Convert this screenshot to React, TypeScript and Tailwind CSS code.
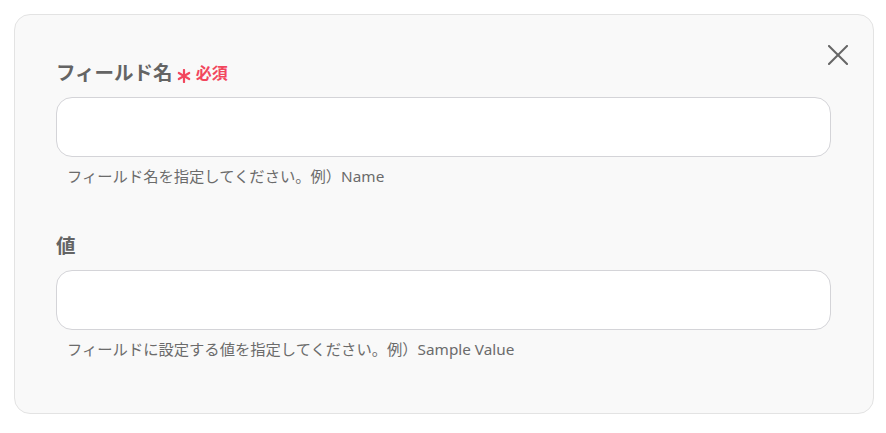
const font = { fontFamily: '"Noto Sans", "Noto Sans CJK JP", sans-serif' };

const Field = ({
  label,
  required,
  help,
}: {
  label: string;
  required?: boolean;
  help: string;
}) => (
  <div className="flex flex-col">
    <div className="flex h-[26px] items-center gap-[4px]">
      <span className="text-[19.5px] font-bold text-[#646464]">{label}</span>
      {required && (
        <span className="flex items-center gap-[5px] text-[#f2475d]">
          <svg width="14" height="14" viewBox="0 0 14 14" className="mt-[5px]">
            <g stroke="#f2475d" strokeWidth="2.2" strokeLinecap="round">
              <line x1="7" y1="1" x2="7" y2="13" />
              <line x1="1.8" y1="4" x2="12.2" y2="10" />
              <line x1="1.8" y1="10" x2="12.2" y2="4" />
            </g>
          </svg>
          <span className="text-[16px] font-bold">必須</span>
        </span>
      )}
    </div>
    <input
      className="mt-[11px] h-[60px] w-full rounded-[16px] border border-[#d4d4d8] bg-white px-4 outline-none"
      style={font}
    />
    <p className="mt-[8px] pl-[11px] text-[15.3px] leading-[22px] text-[#6b6b6b]">{help}</p>
  </div>
);

export default function App() {
  return (
    <div className="min-h-screen bg-white p-[14px]" style={font}>
      <div className="relative h-[400px] w-[860px] rounded-[16px] border border-[#e3e3e3] bg-[#f9f9f9] pl-[41px] pr-[42px] pt-[45px]">
        <button className="absolute right-[25px] top-[30px] p-0">
          <svg width="20" height="20" viewBox="0 0 20 20">
            <g stroke="#666666" strokeWidth="2" strokeLinecap="square">
              <line x1="1" y1="1" x2="19" y2="19" />
              <line x1="19" y1="1" x2="1" y2="19" />
            </g>
          </svg>
        </button>
        <Field label="フィールド名" required help="フィールド名を指定してください。例）Name" />
        <div className="mt-[46px]">
          <Field label="値" help="フィールドに設定する値を指定してください。例）Sample Value" />
        </div>
      </div>
    </div>
  );
}
